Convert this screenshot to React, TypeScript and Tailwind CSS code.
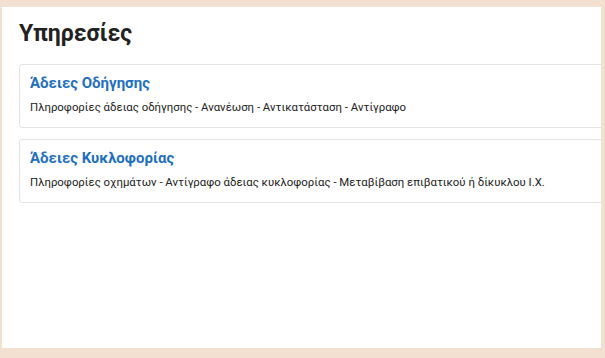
import React from 'react'

const services = [
	{
		title: 'Άδειες Οδήγησης',
		desc: 'Πληροφορίες άδειας οδήγησης - Ανανέωση - Αντικατάσταση - Αντίγραφο',
	},
	{
		title: 'Άδειες Κυκλοφορίας',
		desc: 'Πληροφορίες οχημάτων - Αντίγραφο άδειας κυκλοφορίας - Μεταβίβαση επιβατικού ή δίκυκλου Ι.Χ.',
	},
]

export default function App() {
	return (
		<div className="w-[605px] h-[358px] bg-[#f3e0d0] pt-[7px] pl-[2px] pr-[4px] pb-[10px] font-['Roboto',sans-serif]">
			<div className="h-full bg-white overflow-hidden pl-[17px] pt-[12px]">
				<h1 className="text-[23px] leading-[30px] font-bold text-[#222]">Υπηρεσίες</h1>
				<div className="mt-[15px] flex flex-col gap-[11px] -mr-[4px]">
					{services.map((s) => (
						<div
							key={s.title}
							className="border border-[#e3e3e3] rounded-[3px] h-[64px] px-[10px] pt-[8px]"
						>
							<h2 className="text-[15px] leading-[20px] font-bold text-[#1f6fbf]">{s.title}</h2>
							<p className="mt-[7px] text-[11.4px] leading-[14px] text-[#222]">{s.desc}</p>
						</div>
					))}
				</div>
			</div>
		</div>
	)
}
